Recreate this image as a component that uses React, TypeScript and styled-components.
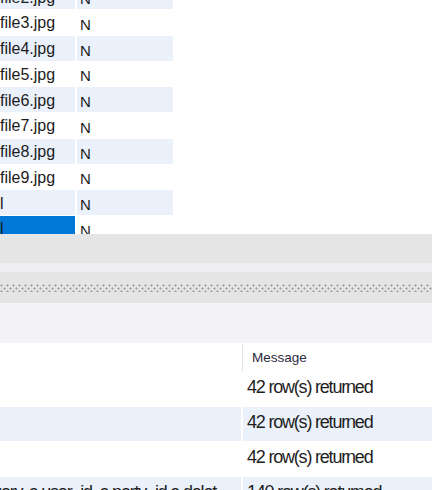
import React from 'react';
import styled, { createGlobalStyle } from 'styled-components';

const GlobalStyle = createGlobalStyle`
  html, body {
    margin: 0;
    padding: 0;
    background: #ffffff;
  }
  body {
    font-family: "Liberation Sans", Arial, sans-serif;
    color: #1e1e1e;
  }
`;

const Page = styled.div`
  width: 432px;
  height: 490px;
  overflow: hidden;
  display: flex;
  flex-direction: column;
  background: #ffffff;
`;

/* ---------- upper data grid ---------- */

const TopGrid = styled.div`
  height: 234px;
  flex: none;
  overflow: hidden;
  background: #ffffff;
`;

// scrolled part way down, so the first row is half out of view
const GridBody = styled.div`
  margin-top: -15.75px;
  display: flex;
  flex-direction: column;
  gap: 1px;
`;

const GridRow = styled.div`
  display: grid;
  grid-template-columns: 75px 96px;
  column-gap: 2px;
  height: 24.75px;
`;

const Cell = styled.div<{ $alt?: boolean; $selected?: boolean }>`
  display: flex;
  align-items: center;
  padding-top: 2px;
  overflow: hidden;
  white-space: nowrap;
  font-size: 16px;
  color: #1b1b1b;
  background: ${p => (p.$selected ? '#0078d7' : p.$alt ? '#eaf1fb' : '#ffffff')};
`;

const FlagCell = styled(Cell)`
  padding-left: 3px;
  font-size: 15px;
  padding-top: 4px;
`;

/* ---------- bars between the grids ---------- */

const Toolbar = styled.div`
  height: 29px;
  flex: none;
  background: #e5e5e5;
`;

const Divider = styled.div`
  height: 9px;
  flex: none;
  background: #eeeef1;
`;

const Splitter = styled.div`
  height: 31px;
  flex: none;
  background: #e5e5e5;
  display: flex;
  flex-direction: column;
  padding-top: 12px;
  box-sizing: border-box;
`;

const Grip = styled.div`
  height: 8px;
  background-image:
    radial-gradient(circle at 1.5px 1.5px, #a3a3a3 0.9px, transparent 1.3px),
    radial-gradient(circle at 4.5px 4.5px, #a3a3a3 0.9px, transparent 1.3px);
  background-size: 6px 6px;
`;

const PanelHeader = styled.div`
  height: 40px;
  flex: none;
  background: #f3f3f5;
`;

/* ---------- results grid ---------- */

const Results = styled.div`
  flex: 1;
  display: flex;
  flex-direction: column;
  gap: 1px;
  background: #ffffff;
`;

const ResultHeader = styled.div`
  display: grid;
  grid-template-columns: 241px 1fr;
  column-gap: 1px;
  height: 27px;
  padding-top: 1px;
`;

const HeaderCell = styled.div<{ $sep?: boolean }>`
  display: flex;
  align-items: center;
  padding-left: 9px;
  padding-bottom: 1px;
  font-size: 13.5px;
  color: #2b2b3d;
  border-left: ${p => (p.$sep ? '1px solid #e3e3e3' : 'none')};
`;

const ResultRow = styled.div`
  display: grid;
  grid-template-columns: 241px 1fr;
  column-gap: 2px;
  height: 34px;
  flex: none;
`;

const ResultCell = styled.div<{ $alt?: boolean }>`
  display: flex;
  align-items: center;
  padding: 0 0 3px 4px;
  overflow: hidden;
  white-space: nowrap;
  font-size: 18px;
  letter-spacing: -1.2px;
  color: #1e1e1e;
  background: ${p => (p.$alt ? '#eaf1fb' : '#ffffff')};
`;

// long query text, cut off at the left edge of the view
const QueryCell = styled(ResultCell)`
  justify-content: flex-end;
  padding: 0 25px 3px 0;
`;

const files = [
  'file2.jpg',
  'file3.jpg',
  'file4.jpg',
  'file5.jpg',
  'file6.jpg',
  'file7.jpg',
  'file8.jpg',
  'file9.jpg',
  'l',
  'l',
];

const results = [
  { query: '', message: '42 row(s) returned' },
  { query: '', message: '42 row(s) returned' },
  { query: '', message: '42 row(s) returned' },
  { query: 'a.category, a.user_id, a.party_id,a.delet', message: '140 row(s) returned' },
];

const App: React.FC = () => {
  return (
    <>
      <GlobalStyle />
      <Page>
        <TopGrid>
          <GridBody>
            {files.map((name, i) => {
              const selected = i === files.length - 1;
              const alt = i % 2 === 0;
              return (
                <GridRow key={i}>
                  <Cell $alt={alt} $selected={selected}>{name}</Cell>
                  <FlagCell $alt={alt}>N</FlagCell>
                </GridRow>
              );
            })}
          </GridBody>
        </TopGrid>

        <Toolbar />
        <Divider />
        <Splitter>
          <Grip />
        </Splitter>
        <PanelHeader />

        <Results>
          <ResultHeader>
            <HeaderCell />
            <HeaderCell $sep>Message</HeaderCell>
          </ResultHeader>
          {results.map((r, i) => (
            <ResultRow key={i}>
              {r.query ? (
                <QueryCell $alt={i % 2 === 1}>
                  <span>{r.query}</span>
                </QueryCell>
              ) : (
                <ResultCell $alt={i % 2 === 1} />
              )}
              <ResultCell $alt={i % 2 === 1}>{r.message}</ResultCell>
            </ResultRow>
          ))}
        </Results>
      </Page>
    </>
  );
};

export default App;
